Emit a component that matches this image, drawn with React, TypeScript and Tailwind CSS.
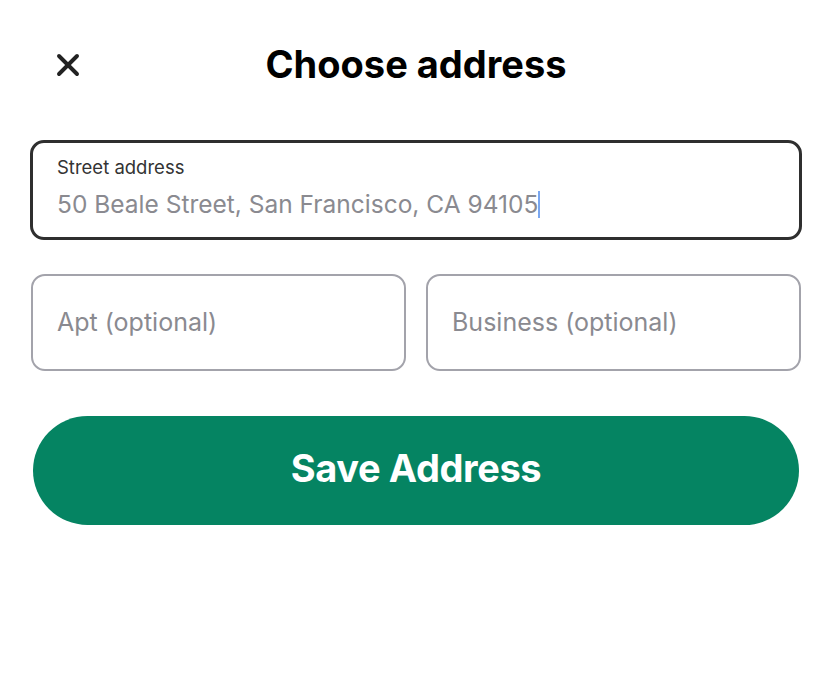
import { X } from 'lucide-react';

export default function App() {
  return (
    <div
      className="h-[686px] w-[832px] bg-white"
      style={{ fontFamily: 'Inter, "Noto Sans", sans-serif' }}
    >
      <div className="relative flex h-[140px] items-start justify-center pt-[40px]">
        <button className="absolute left-[50px] top-[47px] text-[#222]">
          <X size={36} strokeWidth={2.6} />
        </button>
        <h1 className="text-[38px] font-bold leading-[48px] text-black">
          Choose address
        </h1>
      </div>

      <div className="px-[30px]">
        <div className="flex h-[100px] flex-col justify-center rounded-[14px] border-[3px] border-[#2f2f2f] px-[24px] pb-[6px]">
          <label className="text-[18.5px] leading-[24px] text-[#333]">Street address</label>
          <div className="mt-[10px] flex items-center text-[24.5px] leading-[30px] text-[#8a8a90]">
            <span>50 Beale Street, San Francisco, CA 94105</span>
            <span className="h-[27px] w-[2px] bg-[#7aa7f0]" />
          </div>
        </div>

        <div className="mt-[34px] grid grid-cols-2 gap-[20px] px-[1px]">
          <div className="flex h-[97px] items-center rounded-[14px] border-2 border-[#a3a3ab] px-[24px] text-[25px] text-[#8a8a90]">
            Apt (optional)
          </div>
          <div className="flex h-[97px] items-center rounded-[14px] border-2 border-[#a3a3ab] px-[24px] text-[25px] text-[#8a8a90]">
            Business (optional)
          </div>
        </div>

        <div className="mt-[45px] px-[3px]">
          <button className="flex h-[109px] w-full items-center justify-center rounded-full bg-[#058462] pb-[4px] text-[38px] font-bold tracking-[-0.4px] text-white">
            Save Address
          </button>
        </div>
      </div>
    </div>
  );
}
